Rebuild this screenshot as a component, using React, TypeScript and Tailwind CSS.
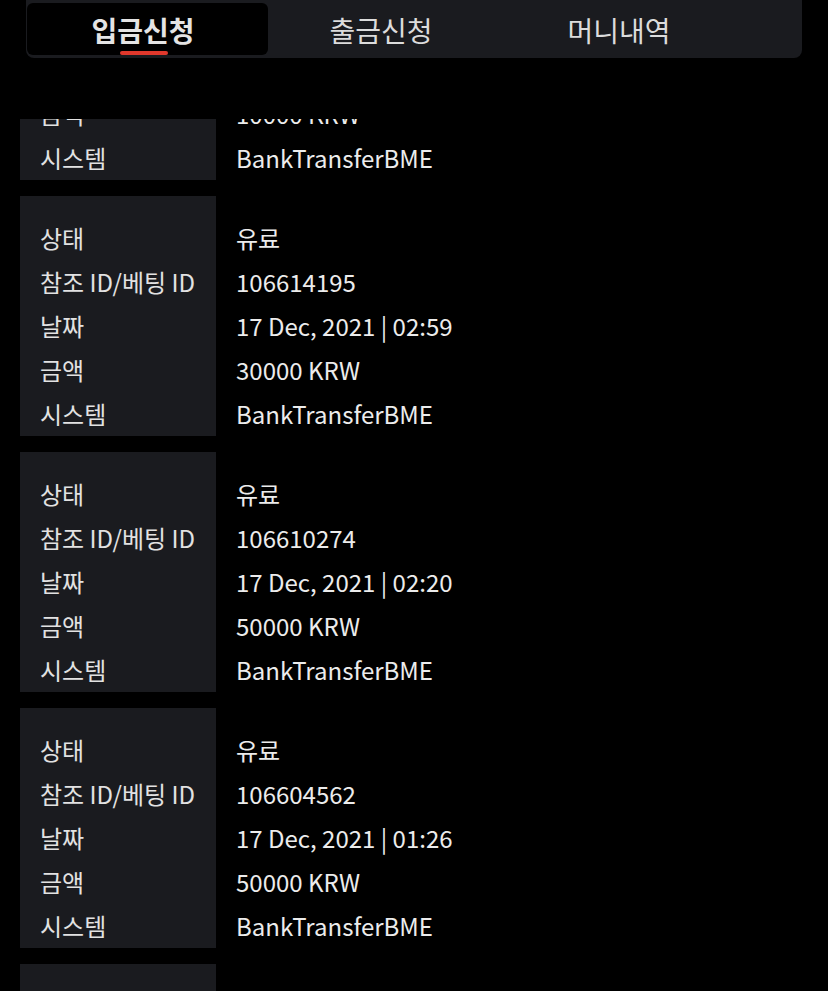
import { useState } from "react";

interface Deposit {
  status: string;
  refId: string;
  date: string;
  amount: string;
  system: string;
}

const deposits: Deposit[] = [
  { status: "유료", refId: "106620831", date: "17 Dec, 2021 | 03:41", amount: "10000 KRW", system: "BankTransferBME" },
  { status: "유료", refId: "106614195", date: "17 Dec, 2021 | 02:59", amount: "30000 KRW", system: "BankTransferBME" },
  { status: "유료", refId: "106610274", date: "17 Dec, 2021 | 02:20", amount: "50000 KRW", system: "BankTransferBME" },
  { status: "유료", refId: "106604562", date: "17 Dec, 2021 | 01:26", amount: "50000 KRW", system: "BankTransferBME" },
  { status: "유료", refId: "106598117", date: "17 Dec, 2021 | 00:48", amount: "20000 KRW", system: "BankTransferBME" },
];

const labels = ["상태", "참조 ID/베팅 ID", "날짜", "금액", "시스템"];

function DepositCard({ item, className = "" }: { item: Deposit; className?: string }) {
  const values = [item.status, item.refId, item.date, item.amount, item.system];
  return (
    <div className={`flex ${className}`}>
      <div className="w-[196px] shrink-0 bg-[#1a1b1f] pt-5 pl-5">
        {labels.map((l) => (
          <div key={l} className="h-11 leading-[44px] whitespace-nowrap text-[#e2e2e2]">
            {l}
          </div>
        ))}
      </div>
      <div className="pt-5 pl-5">
        {values.map((v, i) => (
          <div key={i} className="h-11 leading-[44px] whitespace-nowrap text-[#ececec]">
            {v}
          </div>
        ))}
      </div>
    </div>
  );
}

export default function App() {
  const [tab, setTab] = useState(0);
  const tabs = [
    { label: "입금신청", cls: "w-[241px] pr-[9px]" },
    { label: "출금신청", cls: "w-[238px] pr-3" },
    { label: "머니내역", cls: "w-[238px] pr-3" },
  ];

  return (
    <div className="h-[991px] overflow-hidden bg-black font-['Noto_Sans_CJK_KR','Noto_Sans',sans-serif] text-[24px]">
      <div className="mx-[26px] flex h-[58px] rounded-b-[8px] bg-[#1a1b1f] px-[1px] py-[3px]">
        {tabs.map((t, i) => {
          const active = tab === i;
          return (
            <button
              key={t.label}
              type="button"
              onClick={() => setTab(i)}
              className={`relative flex h-[52px] shrink-0 items-center justify-center rounded-[6px] pt-[2px] text-[28px] leading-none ${t.cls} ${
                active ? "bg-black font-bold text-[#e4e4e4]" : "text-[#dcdcdc]"
              }`}
            >
              {t.label}
              {active && (
                <span className="absolute bottom-0 left-[93px] h-1 w-12 rounded-full bg-[#e0382c]" />
              )}
            </button>
          );
        })}
      </div>

      <div className="mt-[61px] h-[872px] overflow-hidden">
        <div className="-mt-[179px] flex flex-col gap-4">
          {deposits.map((d) => (
            <DepositCard key={d.refId} item={d} className="pl-5" />
          ))}
        </div>
      </div>
    </div>
  );
}
